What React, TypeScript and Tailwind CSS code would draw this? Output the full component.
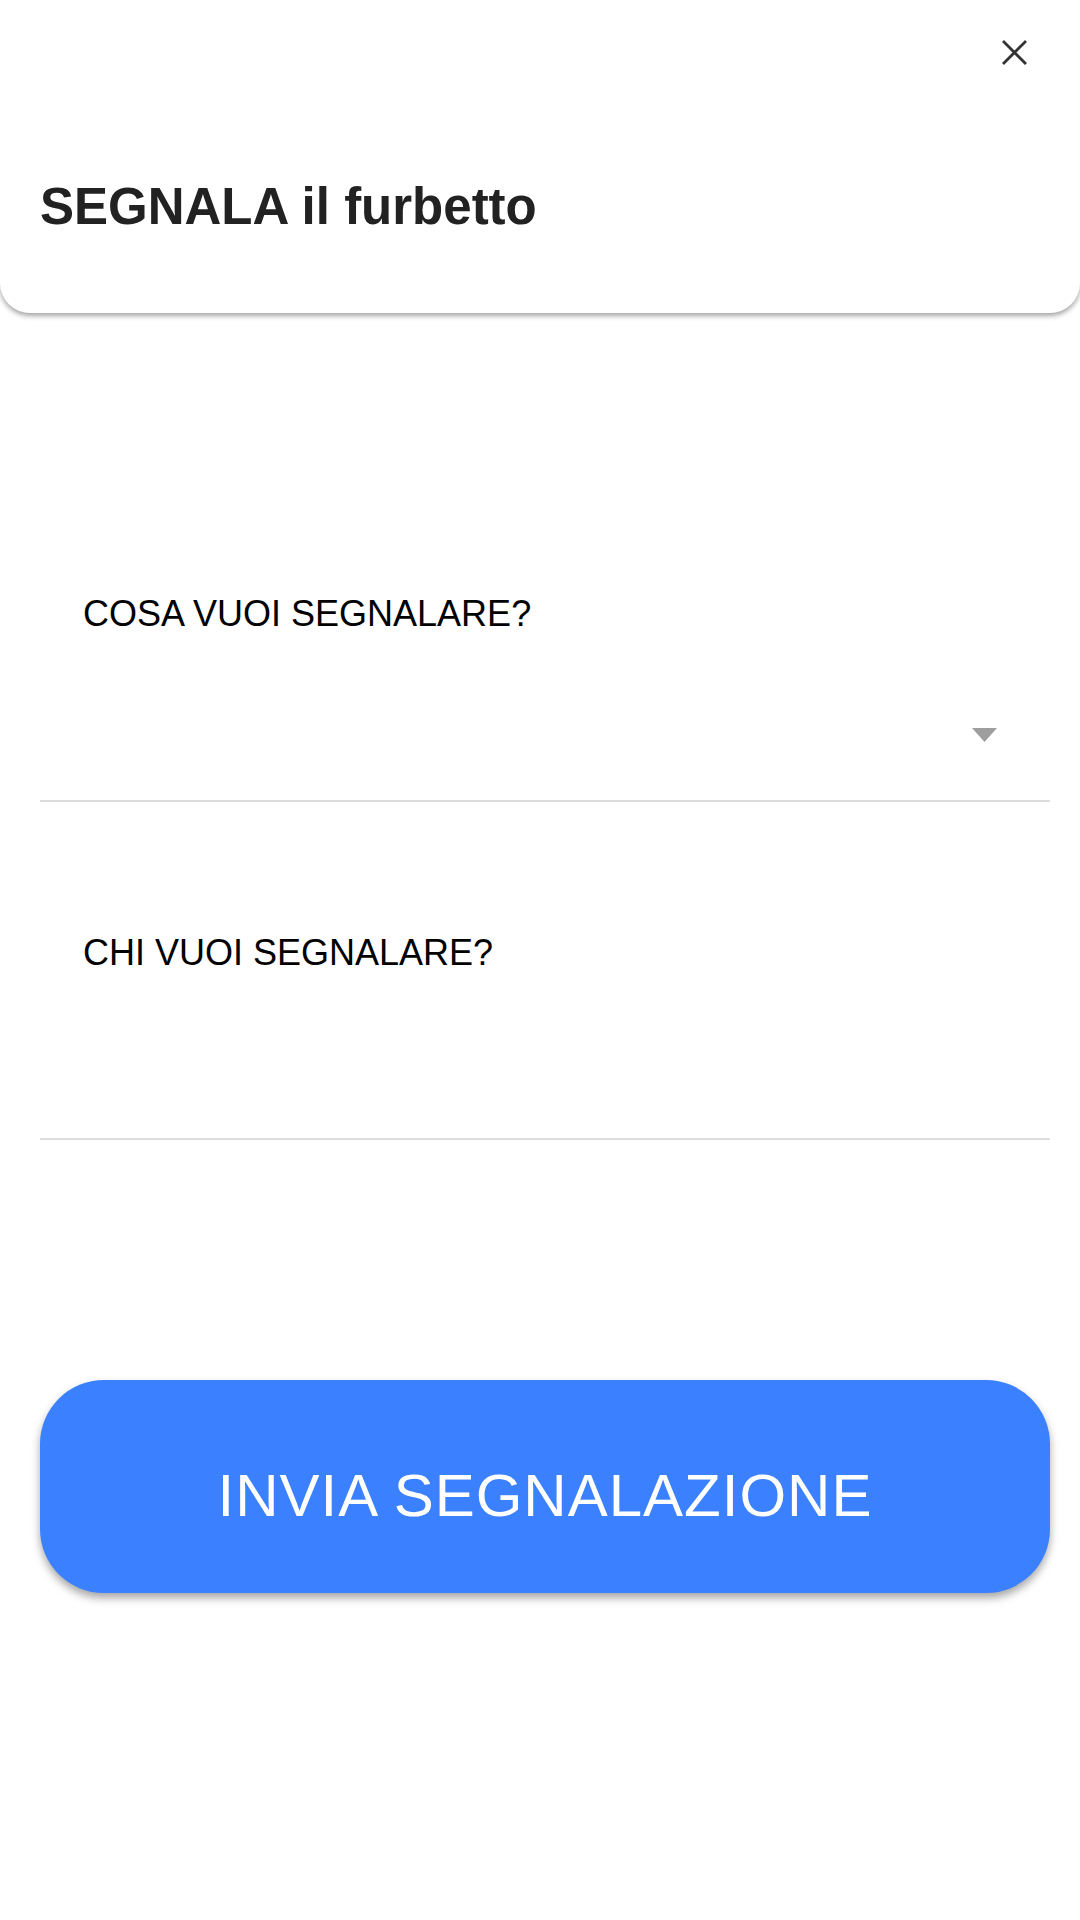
import React from "react";

export default function App() {
  return (
    <div className="w-[1080px] h-[1920px] bg-white flex flex-col overflow-hidden" style={{ fontFamily: '"Liberation Sans", Arial, sans-serif' }}>
      <header className="relative h-[313px] bg-white rounded-b-[30px] shadow-[0_3px_5px_rgba(0,0,0,0.35)] px-[40px] pt-[177px]">
        <button className="absolute right-[52px] top-[39px] w-[27px] h-[27px] text-[#333]" aria-label="close">
          <svg viewBox="0 0 27 27" className="w-full h-full" fill="none" stroke="currentColor" strokeWidth="2.8">
            <path d="M2 2L25 25M25 2L2 25" />
          </svg>
        </button>
        <h1 className="text-[51px] leading-[60px] font-bold text-[#222]">SEGNALA il furbetto</h1>
      </header>

      <div className="pl-[40px] pr-[30px] pt-[277px]">
        <div className="border-b-2 border-[#dcdcdc] h-[550px] flex flex-col">
          <div className="relative h-[212px] border-b-2 border-[#dcdcdc]">
            <div className="pt-[4px] pl-[43px] text-[36px] leading-[40px] text-black">COSA VUOI SEGNALARE?</div>
            <svg className="absolute left-[932px] top-[138px]" width="25" height="14" viewBox="0 0 25 14">
              <path d="M0 0H25L12.5 14Z" fill="#9e9e9e" />
            </svg>
          </div>
          <div className="pt-[131px] pl-[43px] text-[36px] leading-[40px] text-black">CHI VUOI SEGNALARE?</div>
        </div>

        <button className="mt-[240px] w-full h-[213px] pt-[18px] rounded-[64px] bg-[#3a80ff] text-white text-[60px] tracking-[1px] leading-none shadow-[0_5px_8px_rgba(0,0,0,0.35)] flex items-center justify-center">
          INVIA SEGNALAZIONE
        </button>
      </div>
    </div>
  );
}
